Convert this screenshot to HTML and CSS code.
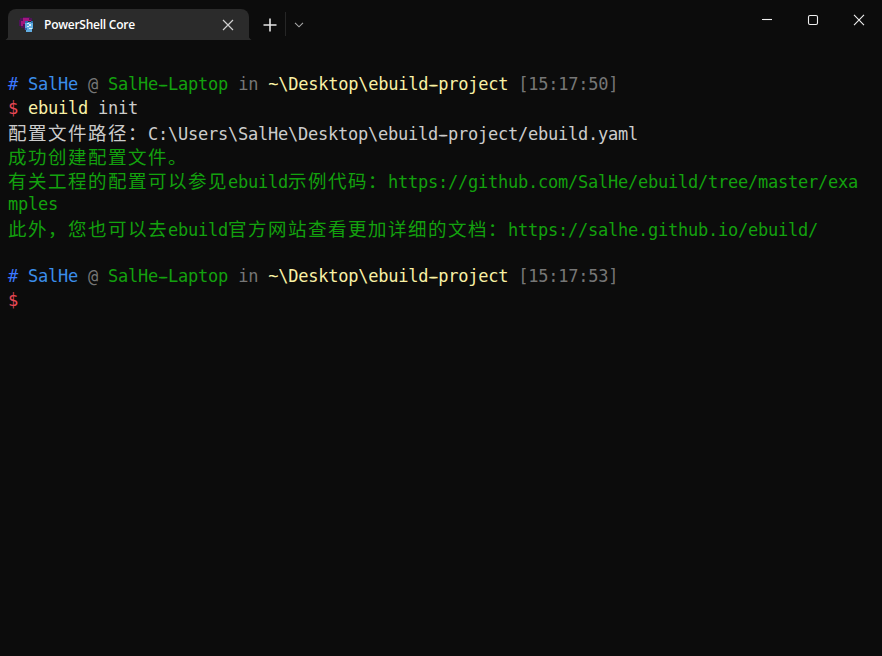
FILE: index.html
```html
<!DOCTYPE html>
<html lang="zh">
<head>
<meta charset="utf-8">
<title>PowerShell Core</title>
<link rel="stylesheet" href="styles.css">
</head>
<body>
<header class="titlebar">
  <div class="tab">
    <svg class="tab-icon" width="16" height="18" viewBox="0 0 16 18">
      <path fill="#4e1458" d="M4 1h7v1h2v3H9v9H5v-2H2v-2H0V4h1V2h3z"/>
      <path fill="#a3177e" d="M4 2h6v2h2v1H6v3H4v2H2V5h2z"/>
      <path fill="#62aee2" d="M6 6h8v7h-1v3H7v-2H6z"/>
      <path fill="#dceffa" d="M8 7h2v1h2v2h-2v1H8v-1h2V8H8zM10 12h3v1h-3z"/>
      <path fill="#2f6fae" d="M6 5h3v2H6zM6 12h2v2H6zM12 5h2v2h-2z"/>
    </svg>
    <span class="tab-title">PowerShell Core</span>
    <svg class="tab-close" width="12" height="12" viewBox="0 0 12 12"><path d="M1 1l10 10M11 1L1 11"/></svg>
  </div>
  <button class="new-tab" aria-label="New tab">
    <svg width="14" height="14" viewBox="0 0 14 14"><path d="M7 .5v13M.5 7h13"/></svg>
  </button>
  <span class="divider"></span>
  <button class="tab-menu" aria-label="Open menu">
    <svg width="10" height="6" viewBox="0 0 10 6"><path d="M1 .8l4 4 4-4"/></svg>
  </button>
  <div class="window-controls">
    <button class="win-btn" aria-label="Minimize"><svg width="12" height="12" viewBox="0 0 12 12"><path d="M1 5.5h10"/></svg></button>
    <button class="win-btn" aria-label="Maximize"><svg width="12" height="12" viewBox="0 0 12 12"><rect x="1.5" y="1.5" width="9" height="9" rx="1.5"/></svg></button>
    <button class="win-btn" aria-label="Close"><svg width="12" height="12" viewBox="0 0 12 12"><path d="M1 .8l10 10.4M11 .8L1 11.2"/></svg></button>
  </div>
</header>
<main class="terminal">
  <div class="line"></div>
  <div class="line"><span class="blue2"># </span><span class="blue">SalHe</span> <span class="gray">@</span> <span class="green">SalHe<span class="dash">-</span>Laptop</span> <span class="gray">in</span> <span class="yellow">~\Desktop\ebuild<span class="dash">-</span>project</span> <span class="gray">[15:17:50]</span></div>
  <div class="line"><span class="red">$ </span><span class="yellow">ebuild</span> <span class="white">init</span></div>
  <div class="line white"><span class="cjk">配置文件路径：</span>C:\Users\SalHe\Desktop\ebuild<span class="dash">-</span>project/ebuild.yaml</div>
  <div class="line green"><span class="cjk">成功创建配置文件。</span></div>
  <div class="line green"><span class="cjk">有关工程的配置可以参见</span>ebuild<span class="cjk">示例代码：</span>https://github.com/SalHe/ebuild/tree/master/exa</div>
  <div class="line green">mples</div>
  <div class="line green"><span class="cjk">此外，您也可以去</span>ebuild<span class="cjk">官方网站查看更加详细的文档：</span>https://salhe.github.io/ebuild/</div>
  <div class="line"></div>
  <div class="line"><span class="blue2"># </span><span class="blue">SalHe</span> <span class="gray">@</span> <span class="green">SalHe<span class="dash">-</span>Laptop</span> <span class="gray">in</span> <span class="yellow">~\Desktop\ebuild<span class="dash">-</span>project</span> <span class="gray">[15:17:53]</span></div>
  <div class="line"><span class="red">$</span></div>
</main>
</body>
</html>
```
FILE: styles.css
```css
* { box-sizing: border-box; }
html, body { margin: 0; height: 100%; }
body { background: #0c0c0c; overflow: hidden; }

.titlebar {
  display: flex;
  align-items: flex-end;
  height: 40px;
  padding-left: 8px;
}
.tab {
  position: relative;
  display: flex;
  align-items: center;
  width: 241px;
  height: 31px;
  padding: 0 15px 0 11px;
  background: #2b2b2b;
  border-radius: 8px 8px 0 0;
  color: #fff;
  font: 600 12px/16px "Open Sans", sans-serif;
}
.tab::before,
.tab::after {
  content: "";
  position: absolute;
  bottom: 0;
  width: 3px;
  height: 3px;
  background: radial-gradient(circle at 0 0, transparent 2.5px, #2b2b2b 3px);
}
.tab::before { left: -3px; }
.tab::after { right: -3px; transform: scaleX(-1); }
.tab-icon { flex: none; }
.tab-title { flex: 1; margin-left: 9px; letter-spacing: -0.25px; white-space: nowrap; }
.tab-close path { fill: none; stroke: #d0d0d0; stroke-width: 1.2; }
button {
  display: flex;
  align-items: center;
  justify-content: center;
  padding: 0;
  background: none;
  border: 0;
}
.new-tab {
  width: 36px;
  height: 31px;
  padding-left: 6px;
}
.new-tab path { fill: none; stroke: #e4e4e4; stroke-width: 1.6; }
.divider {
  width: 1px;
  height: 24px;
  margin-bottom: 4px;
  background: #262626;
}
.tab-menu { width: 26px; height: 31px; }
.tab-menu path { fill: none; stroke: #a8a8a8; stroke-width: 1.1; }
.window-controls {
  display: flex;
  align-self: flex-start;
  margin-left: auto;
}
.win-btn { width: 46px; height: 40px; }
.win-btn svg { fill: none; stroke: #efefef; stroke-width: 1.1; }

.terminal {
  padding: 8px 0 0 8px;
  font: 17px/24px "DejaVu Sans Mono", monospace;
  letter-spacing: -0.234px;
  color: #cccccc;
}
.line { height: 24px; white-space: pre; }
.dash { text-shadow: 2px 0 currentColor, -2px 0 currentColor; }
.cjk {
  font-family: "Noto Sans CJK SC", sans-serif;
  font-size: 18.5px;
  font-weight: 400;
  letter-spacing: 1.5px;
}
.blue { color: #3b8eea; }
.blue2 { color: #3b78ff; }
.gray { color: #767676; }
.green { color: #13a10e; }
.yellow { color: #f9f1a5; }
.red { color: #e74856; }
.white { color: #cccccc; }
```
